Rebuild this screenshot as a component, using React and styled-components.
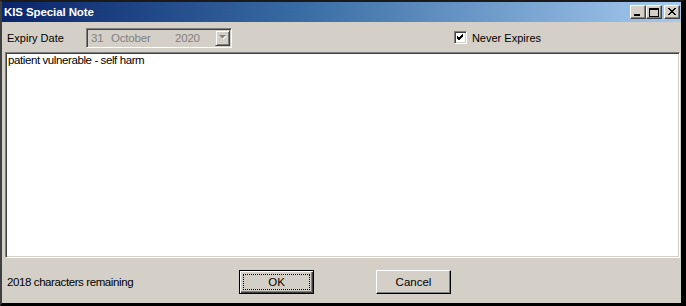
import React from "react";
import styled, { createGlobalStyle } from "styled-components";

const Global = createGlobalStyle`
  html, body {
    margin: 0;
    padding: 0;
    background: #d4d0c8;
  }
  * {
    box-sizing: border-box;
  }
`;

const Window = styled.div`
  width: 686px;
  height: 306px;
  display: flex;
  flex-direction: column;
  background: #d4d0c8;
  border-top: 2px solid #1a1a1a;
  border-left: 2px solid #404040;
  border-right: 5px solid #000;
  border-bottom: 3px solid #000;
  font-family: "Liberation Sans", Arial, sans-serif;
  font-size: 11px;
  color: #000;
`;

const TitleBar = styled.div`
  height: 20px;
  display: flex;
  align-items: center;
  padding: 0 1px 0 2px;
  background: linear-gradient(to right, #0a246a 0%, #3a6ea5 45%, #a6caf0 100%);
`;

const Title = styled.div`
  flex: 1;
  color: #fff;
  font-weight: bold;
  font-size: 11.5px;
  letter-spacing: -0.1px;
`;

const CaptionButton = styled.div`
  width: 16px;
  height: 14px;
  margin-left: ${(p) => (p.$gap ? "2px" : "0")};
  background: #d4d0c8;
  border-top: 1px solid #fff;
  border-left: 1px solid #fff;
  border-right: 1px solid #404040;
  border-bottom: 1px solid #404040;
  box-shadow: inset -1px -1px 0 #808080;
  display: flex;
  align-items: center;
  justify-content: center;
`;

const Toolbar = styled.div`
  height: 30px;
  display: flex;
  align-items: center;
  padding: 1px 0 0 5px;
`;

const Label = styled.span`
  width: 79px;
`;

const Combo = styled.div`
  width: 146px;
  height: 20px;
  display: flex;
  align-items: center;
  background: #d4d0c8;
  border-top: 1px solid #808080;
  border-left: 1px solid #808080;
  border-right: 1px solid #fff;
  border-bottom: 1px solid #fff;
  box-shadow: inset 1px 1px 0 #404040, inset -1px -1px 0 #d4d0c8;
  padding: 0 1px 0 4px;
`;

const ComboText = styled.div`
  flex: 1;
  color: #808080;
  display: flex;
  font-size: 11.5px;
  letter-spacing: -0.2px;
`;

const ComboField = styled.span`
  width: ${(p) => p.$w};
`;

const ComboArrow = styled.div`
  width: 16px;
  height: 16px;
  background: #d4d0c8;
  border-top: 1px solid #d4d0c8;
  border-left: 1px solid #d4d0c8;
  border-right: 1px solid #404040;
  border-bottom: 1px solid #404040;
  box-shadow: inset 1px 1px 0 #fff, inset -1px -1px 0 #808080;
  display: flex;
  align-items: center;
  justify-content: center;
`;

const Spacer = styled.div`
  flex: 1;
`;

const CheckRow = styled.label`
  display: flex;
  align-items: center;
  gap: 5px;
  margin-right: 140px;
`;

const CheckBox = styled.div`
  width: 13px;
  height: 13px;
  background: #fff;
  border-top: 1px solid #808080;
  border-left: 1px solid #808080;
  border-right: 1px solid #fff;
  border-bottom: 1px solid #fff;
  box-shadow: inset 1px 1px 0 #404040, inset -1px -1px 0 #d4d0c8;
  display: flex;
  align-items: center;
  justify-content: center;
`;

const NoteArea = styled.div`
  flex: 1;
  margin: 0 1px 0 3px;
  background: #fff;
  border-top: 1px solid #808080;
  border-left: 1px solid #808080;
  border-right: 1px solid #fff;
  border-bottom: 1px solid #fff;
  box-shadow: inset 1px 1px 0 #404040, inset -1px -1px 0 #d4d0c8;
  padding: 1px 2px;
  font-size: 11.5px;
  letter-spacing: -0.4px;
`;

const Footer = styled.div`
  height: 45px;
  display: flex;
  align-items: center;
  padding: 2px 0 0 5px;
`;

const Remaining = styled.span`
  width: 232px;
  font-size: 11.5px;
  letter-spacing: -0.4px;
`;

const Button = styled.div`
  width: 75px;
  height: 24px;
  margin-right: ${(p) => p.$mr || "0"};
  display: flex;
  align-items: center;
  justify-content: center;
  background: #d4d0c8;
  font-size: 11.5px;
  border-top: 1px solid ${(p) => (p.$default ? "#000" : "#fff")};
  border-left: 1px solid ${(p) => (p.$default ? "#000" : "#fff")};
  border-right: 1px solid #000;
  border-bottom: 1px solid #000;
  box-shadow: ${(p) =>
    p.$default
      ? "inset 1px 1px 0 #fff, inset -1px -1px 0 #404040, inset -2px -2px 0 #808080"
      : "inset -1px -1px 0 #808080"};
  position: relative;
`;

const FocusRing = styled.div`
  position: absolute;
  inset: 3px;
  border: 1px dotted #000;
`;

const Glyph = ({ type }) => {
  if (type === "min")
    return (
      <svg width="8" height="8" viewBox="0 0 8 8">
        <rect x="0" y="6" width="6" height="2" fill="#000" />
      </svg>
    );
  if (type === "max")
    return (
      <svg width="10" height="9" viewBox="0 0 10 9">
        <rect x="0.5" y="0.5" width="9" height="8" fill="none" stroke="#000" />
        <rect x="0" y="0" width="10" height="2" fill="#000" />
      </svg>
    );
  return (
    <svg width="9" height="8" viewBox="0 0 9 8">
      <path d="M1 0 L8 7 M0 0 L7 7 M8 0 L1 7 M7 0 L0 7" stroke="#000" strokeWidth="1" />
    </svg>
  );
};

export default function App() {
  return (
    <>
      <Global />
      <Window>
        <TitleBar>
          <Title>KIS Special Note</Title>
          <CaptionButton>
            <Glyph type="min" />
          </CaptionButton>
          <CaptionButton>
            <Glyph type="max" />
          </CaptionButton>
          <CaptionButton $gap>
            <Glyph type="close" />
          </CaptionButton>
        </TitleBar>
        <Toolbar>
          <Label>Expiry Date</Label>
          <Combo>
            <ComboText>
              <ComboField $w="20px">31</ComboField>
              <ComboField $w="64px">October</ComboField>
              <ComboField $w="40px">2020</ComboField>
            </ComboText>
            <ComboArrow>
              <svg width="8" height="5" viewBox="0 0 8 5">
                <path d="M1 1 L8 1 L4.5 4.5 Z" fill="#fff" />
                <path d="M0 0 L7 0 L3.5 3.5 Z" fill="#808080" />
              </svg>
            </ComboArrow>
          </Combo>
          <Spacer />
          <CheckRow>
            <CheckBox>
              <svg width="7" height="7" viewBox="0 0 7 7">
                <path d="M0 2 L2 4 L6 0 M0 3 L2 5 L6 1 M0 4 L2 6 L6 2" stroke="#000" fill="none" />
              </svg>
            </CheckBox>
            <span>Never Expires</span>
          </CheckRow>
        </Toolbar>
        <NoteArea>patient vulnerable - self harm</NoteArea>
        <Footer>
          <Remaining>2018 characters remaining</Remaining>
          <Button $default $mr="62px">
            <FocusRing />
            OK
          </Button>
          <Button>Cancel</Button>
        </Footer>
      </Window>
    </>
  );
}
